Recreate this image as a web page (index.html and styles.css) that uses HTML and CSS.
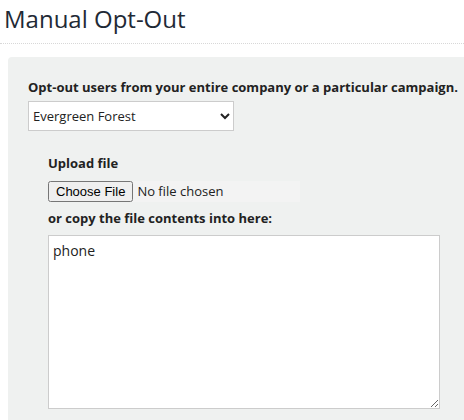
FILE: index.html
```html
<!DOCTYPE html>
<html>
<head>
<meta charset="utf-8">
<link rel="stylesheet" href="styles.css">
</head>
<body>
<h1 class="title">Manual Opt-Out</h1>
<div class="panel">
  <label class="lead">Opt-out users from your entire company or a particular campaign.</label>
  <select class="campaign">
    <option>Evergreen Forest</option>
  </select>
  <div class="upload">
    <label class="sub">Upload file</label>
    <input type="file" class="file">
    <label class="sub">or copy the file contents into here:</label>
    <textarea class="contents">phone</textarea>
  </div>
</div>
</body>
</html>
```
FILE: styles.css
```css
html, body {
  margin: 0;
  padding: 0;
  background: #fff;
  overflow: hidden;
}
body {
  font-family: "Open Sans", sans-serif;
  color: #222;
  width: 464px;
  height: 420px;
}
.title {
  margin: 2px 0 0 0;
  padding: 0 0 8px 4px;
  font-size: 24px;
  font-weight: 400;
  line-height: 33px;
  color: #1f2a36;
  border-bottom: 1px dotted #d8d8d8;
}
.panel {
  margin: 13px 0 0 8px;
  background: #eff1f0;
  border-radius: 4px 0 0 0;
  padding: 20px 0 0 20px;
  display: flex;
  flex-direction: column;
  align-items: flex-start;
  height: 363px;
  box-sizing: border-box;
  overflow: hidden;
}
.lead {
  font-weight: 700;
  font-size: 13px;
  line-height: 20px;
  color: #222;
}
.campaign {
  margin-top: 4px;
  width: 206px;
  height: 30px;
  font-family: "Open Sans", sans-serif;
  font-size: 13px;
  color: #222;
  background: #fff;
  border: 1px solid #ccc;
  border-radius: 0;
  padding: 0;
}
.upload {
  margin: 22px 0 0 20px;
  display: flex;
  flex-direction: column;
  align-items: flex-start;
}
.sub {
  font-weight: 700;
  font-size: 13px;
  line-height: 20px;
  color: #222;
}
.file {
  margin: 8px 0 6px 0;
  width: 252px;
  height: 21px;
  font-family: "Open Sans", sans-serif;
  font-size: 13px;
  background: #f3f3f3;
}
.contents {
  margin-top: 7px;
  width: 392px;
  height: 174px;
  box-sizing: border-box;
  border: 1px solid #ccc;
  background: #fff;
  font-family: "Open Sans", sans-serif;
  font-size: 14px;
  color: #222;
  padding: 5px 4px 4px 4px;
  resize: both;
}
```
